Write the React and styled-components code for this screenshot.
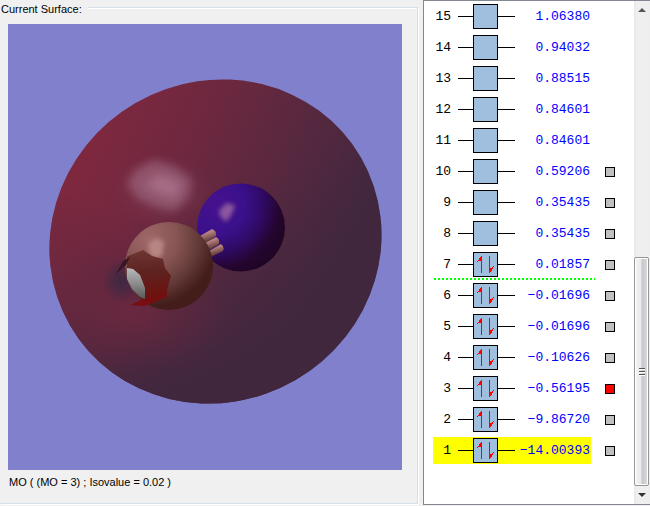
import React, { useState } from 'react';
import styled, { createGlobalStyle } from 'styled-components';

const GlobalStyle = createGlobalStyle`
  * {
    box-sizing: border-box;
  }

  body {
    margin: 0;
    background: #f0f0f0;
    color: #000;
    font-family: "Liberation Sans", Arial, sans-serif;
    font-size: 11px;
  }
`;

const Window = styled.main`
  display: flex;
  height: 100vh;
  overflow: hidden;
`;

const SurfaceColumn = styled.div`
  display: flex;
  flex: 1;
  min-width: 0;
  padding: 0 5px 2px 0;
`;

const SurfaceGroup = styled.fieldset`
  flex: 1;
  min-width: 0;
  margin: 0;
  padding: 9px 15px 9px 8px;
  border: 1px solid #d5dfe5;
  border-left: 0;
  box-shadow: inset 0 1px #fff, 1px 1px #fff;
`;

const GroupTitle = styled.legend`
  height: 15px;
  padding: 0 6px 0 1px;
  margin-left: -8px;
  background: #f0f0f0;
  line-height: 18px;
`;

const SurfaceBody = styled.figure`
  display: flex;
  flex-direction: column;
  height: 100%;
  margin: 0;
`;

const Viewport = styled.svg`
  display: block;
  flex: 1;
  min-height: 0;
  width: 100%;
  background: #8080cc;
`;

const Caption = styled.figcaption`
  height: 24px;
  padding-left: 1px;
  line-height: 24px;
`;

const OrbitalPanel = styled.section`
  display: flex;
  width: 227px;
  margin-bottom: 1px;
  border: 1px solid #828790;
  border-right: 0;
  background: #fff;
`;

const OrbitalList = styled.div`
  flex: 1;
  overflow: hidden;
  padding-left: 9px;
`;

const OrbitalTable = styled.table`
  display: block;
  font-family: "Liberation Mono", "Courier New", monospace;
  font-size: 13px;

  tbody {
    display: block;
  }
`;

const OrbitalRow = styled.tr`
  display: grid;
  grid-template-columns: 25px 57px 76px 1fr;
  height: 31px;
  padding: 2px 0;
  background: ${props => props.$homo
    ? 'repeating-linear-gradient(90deg, #0f0 0 2px, #fff 2px 4px) 1px 100% / 161px 2px no-repeat'
    : 'none'};
`;

const Cell = styled.td`
  display: flex;
  align-items: center;
  padding: 0;
  background: ${props => (props.$selected ? '#ff0' : 'transparent')};
`;

const NumberCell = styled(Cell)`
  justify-content: flex-end;
  padding-right: 7px;
`;

const EnergyCell = styled(Cell)`
  justify-content: flex-end;
  padding-right: 1px;
  color: #00f;
`;

const ToggleCell = styled(Cell)`
  padding-left: 14px;
`;

const Lead = styled.span`
  width: ${props => props.$width}px;
  height: 1px;
  background: #000;
`;

const OrbitalBox = styled.span`
  display: flex;
  width: 25px;
  height: 25px;
  border: 1px solid #000;
  background: #a0bfdf;
`;

const SurfaceToggle = styled.input`
  appearance: none;
  width: 10px;
  height: 10px;
  margin: 0;
  border: 1px solid #000;
  background: #c0c0c0;

  &:checked {
    background: #f00;
  }
`;

const ScrollBar = styled.div`
  display: flex;
  flex-direction: column;
  width: 16px;
  background: linear-gradient(90deg, #e8e8e8, #f0f0f0 3px, #eee);
`;

const ScrollButton = styled.button`
  display: flex;
  align-items: center;
  justify-content: center;
  width: 16px;
  height: 18px;
  padding: 0;
  border: 0;
  background: none;
`;

const ScrollTrack = styled.div`
  display: flex;
  flex: 1;
  flex-direction: column;
  justify-content: flex-end;
`;

const ScrollThumb = styled.div`
  display: flex;
  flex-direction: column;
  align-items: center;
  justify-content: center;
  gap: 1px;
  width: 15px;
  height: 49%;
  border: 1px solid #979797;
  border-radius: 2px;
  background: linear-gradient(90deg, #f6f6f6, #e8e8ea 45%, #c8c8cc 55%, #dcdce0);
  box-shadow: inset 0 0 0 1px #fff;
`;

const Grip = styled.span`
  width: 6px;
  height: 2px;
  border-top: 1px solid #555;
  background: #fff;
`;

const orbitals = [
  { id: 15, energy: '1.06380' },
  { id: 14, energy: '0.94032' },
  { id: 13, energy: '0.88515' },
  { id: 12, energy: '0.84601' },
  { id: 11, energy: '0.84601' },
  { id: 10, energy: '0.59206', surface: true },
  { id: 9, energy: '0.35435', surface: true },
  { id: 8, energy: '0.35435', surface: true },
  { id: 7, energy: '0.01857', surface: true, filled: true, homo: true },
  { id: 6, energy: '−0.01696', surface: true, filled: true },
  { id: 5, energy: '−0.01696', surface: true, filled: true },
  { id: 4, energy: '−0.10626', surface: true, filled: true },
  { id: 3, energy: '−0.56195', surface: true, filled: true },
  { id: 2, energy: '−9.86720', surface: true, filled: true },
  { id: 1, energy: '−14.00393', surface: true, filled: true },
];

function ElectronPair() {
  return (
    <svg width="23" height="23" shapeRendering="crispEdges" aria-hidden="true">
      <path d="M7 3h1v17h-1zM6 4h1v4h-1zM5 5h1v3h-1zM4 7h1v1h-1zM3 8h1v1h-1z" fill="#f00" />
      <path d="M15 3h1v17h-1zM16 15h1v4h-1zM17 15h1v3h-1zM18 14h1v2h-1zM19 13h1v1h-1z" fill="#f00" />
    </svg>
  );
}

function Molecule() {
  return (
    <Viewport viewBox="8 24 394 446" preserveAspectRatio="xMidYMid meet" role="img" aria-label="Molecular orbital surface">
      <defs>
        <linearGradient id="shell" gradientUnits="userSpaceOnUse" x1="95" y1="150" x2="345" y2="265">
          <stop offset="0" stopColor="#7d283f" />
          <stop offset="0.35" stopColor="#6b283f" />
          <stop offset="0.7" stopColor="#54283f" />
          <stop offset="1" stopColor="#40273e" />
        </linearGradient>
        <linearGradient id="shade" gradientUnits="userSpaceOnUse" x1="165" y1="210" x2="215" y2="375">
          <stop offset="0" stopColor="#40273e" stopOpacity="0" />
          <stop offset="0.3" stopColor="#40273e" stopOpacity="0.25" />
          <stop offset="1" stopColor="#40273e" stopOpacity="0.95" />
        </linearGradient>
        <radialGradient id="glow">
          <stop offset="0" stopColor="#6d283f" />
          <stop offset="0.4" stopColor="#68283f" stopOpacity="0.6" />
          <stop offset="1" stopColor="#60283f" stopOpacity="0" />
        </radialGradient>
        <radialGradient id="dent">
          <stop offset="0" stopColor="#3e2842" />
          <stop offset="0.4" stopColor="#402842" stopOpacity="0.7" />
          <stop offset="1" stopColor="#422842" stopOpacity="0" />
        </radialGradient>
        <radialGradient id="sheen">
          <stop offset="0" stopColor="#93586f" stopOpacity="0.6" />
          <stop offset="0.5" stopColor="#85465c" stopOpacity="0.35" />
          <stop offset="1" stopColor="#78304a" stopOpacity="0" />
        </radialGradient>
        <radialGradient id="blueAtom" gradientUnits="userSpaceOnUse" cx="216" cy="205" r="72">
          <stop offset="0" stopColor="#46128e" />
          <stop offset="0.4" stopColor="#3b108b" />
          <stop offset="0.65" stopColor="#300a65" />
          <stop offset="0.88" stopColor="#24052f" />
          <stop offset="1" stopColor="#210527" />
        </radialGradient>
        <radialGradient id="brownAtom" gradientUnits="userSpaceOnUse" cx="149" cy="239" r="70">
          <stop offset="0" stopColor="#a06868" />
          <stop offset="0.4" stopColor="#875554" />
          <stop offset="0.7" stopColor="#633b38" />
          <stop offset="0.95" stopColor="#441e1b" />
          <stop offset="1" stopColor="#421d1a" />
        </radialGradient>
        <linearGradient id="bond" x1="0" y1="0" x2="0.35" y2="1">
          <stop offset="0" stopColor="#8f5a58" />
          <stop offset="0.35" stopColor="#b98583" />
          <stop offset="1" stopColor="#4c2725" />
        </linearGradient>
        <linearGradient id="cap" x1="0" y1="0" x2="0" y2="1">
          <stop offset="0" stopColor="#b8b8b8" />
          <stop offset="0.5" stopColor="#8c8c8c" />
          <stop offset="1" stopColor="#585858" />
        </linearGradient>
        <linearGradient id="tear" gradientUnits="userSpaceOnUse" x1="150" y1="250" x2="155" y2="303">
          <stop offset="0" stopColor="#6d3532" />
          <stop offset="0.4" stopColor="#5e2320" />
          <stop offset="0.75" stopColor="#6a1613" />
          <stop offset="1" stopColor="#760c0c" />
        </linearGradient>
        <filter id="soft" x="-50%" y="-50%" width="200%" height="200%">
          <feGaussianBlur stdDeviation="4" />
        </filter>
        <filter id="softer" x="-50%" y="-50%" width="200%" height="200%">
          <feGaussianBlur stdDeviation="2" />
        </filter>
        <clipPath id="shellClip">
          <ellipse cx="215.500" cy="241.500" rx="168" ry="160" transform="rotate(-30 215.500 241.500)" />
        </clipPath>
      </defs>
      <g clipPath="url(#shellClip)">
        <rect x="40" y="70" width="350" height="340" fill="url(#shell)" />
        <rect x="40" y="70" width="350" height="340" fill="url(#shade)" />
        <ellipse cx="55" cy="255" rx="70" ry="65" fill="url(#glow)" opacity="0.7" />
        <ellipse cx="130" cy="312" rx="105" ry="62" fill="url(#glow)" opacity="0.9" />
        <ellipse cx="122" cy="281" rx="20" ry="22" fill="url(#dent)" />
        <ellipse cx="162" cy="190" rx="52" ry="38" fill="url(#sheen)" />
        <path d="M127 184L135 170L153 160L174 166L192 180L188 198L174 211L156 206L138 198Z" fill="#a06a82" opacity="0.6" filter="url(#soft)" />
        <path d="M144 184L160 174L182 183L176 198L162 194Z" fill="#b8809a" opacity="0.5" filter="url(#soft)" />
      </g>
      <circle cx="241" cy="227.500" r="44" fill="url(#blueAtom)" />
      <path d="M219 211L226 203L235 205L232 214L226 222L220 216Z" fill="#9764a0" opacity="0.85" filter="url(#softer)" />
      <path d="M200 236L212 229Q217 231 216 236L204 244Z" fill="url(#bond)" />
      <path d="M205 243L216 237Q220 239 219 244L208 251Z" fill="url(#bond)" />
      <path d="M209 251L221 244Q225 247 223 251L211 257Z" fill="url(#bond)" />
      <circle cx="169" cy="266" r="44" fill="url(#brownAtom)" />
      <path d="M148 244L156 238L164 242L162 256L155 259L149 253Z" fill="#c39390" opacity="0.75" filter="url(#softer)" />
      <path d="M127 256.500L143 250L152 256L163 259L165 268L171 276L167 290L167 297L150 304L131 305L141 301L145 296L145 288L140 275L133 269L127 268Z" fill="url(#tear)" />
      <path d="M116 274L123 261L130 257L126 265Z" fill="#391623" />
      <path d="M127 268L133 269L140 275L145 288L145 299L140 297L132 289L127 279Z" fill="url(#cap)" />
      <path d="M131 305L143 299L152 303L144 306Z" fill="#780e13" />
    </Viewport>
  );
}

function App() {
  const [surface, setSurface] = useState(3);
  const selected = 1;

  return (
    <Window>
      <GlobalStyle />
      <SurfaceColumn>
        <SurfaceGroup>
          <GroupTitle>Current Surface:</GroupTitle>
          <SurfaceBody>
            <Molecule />
            <Caption>MO ( (MO = {surface}) ; Isovalue = 0.02 )</Caption>
          </SurfaceBody>
        </SurfaceGroup>
      </SurfaceColumn>
      <OrbitalPanel>
        <OrbitalList>
          <OrbitalTable>
            <tbody>
              {orbitals.map(orbital => (
                <OrbitalRow key={orbital.id} $homo={orbital.homo}>
                  <NumberCell $selected={orbital.id === selected}>{orbital.id}</NumberCell>
                  <Cell $selected={orbital.id === selected}>
                    <Lead $width={15} />
                    <OrbitalBox>{orbital.filled && <ElectronPair />}</OrbitalBox>
                    <Lead $width={17} />
                  </Cell>
                  <EnergyCell $selected={orbital.id === selected}>{orbital.energy}</EnergyCell>
                  <ToggleCell>
                    {orbital.surface && (
                      <SurfaceToggle
                        type="checkbox"
                        aria-label={`Show surface of orbital ${orbital.id}`}
                        checked={orbital.id === surface}
                        onChange={() => setSurface(orbital.id)}
                      />
                    )}
                  </ToggleCell>
                </OrbitalRow>
              ))}
            </tbody>
          </OrbitalTable>
        </OrbitalList>
        <ScrollBar>
          <ScrollButton type="button" aria-label="Scroll up">
            <svg width="8" height="4"><path d="M0 4L4 0L8 4Z" fill="#555" /></svg>
          </ScrollButton>
          <ScrollTrack>
            <ScrollThumb>
              <Grip />
              <Grip />
              <Grip />
            </ScrollThumb>
          </ScrollTrack>
          <ScrollButton type="button" aria-label="Scroll down">
            <svg width="8" height="4"><path d="M0 0L4 4L8 0Z" fill="#333" /></svg>
          </ScrollButton>
        </ScrollBar>
      </OrbitalPanel>
    </Window>
  );
}

export default App;
